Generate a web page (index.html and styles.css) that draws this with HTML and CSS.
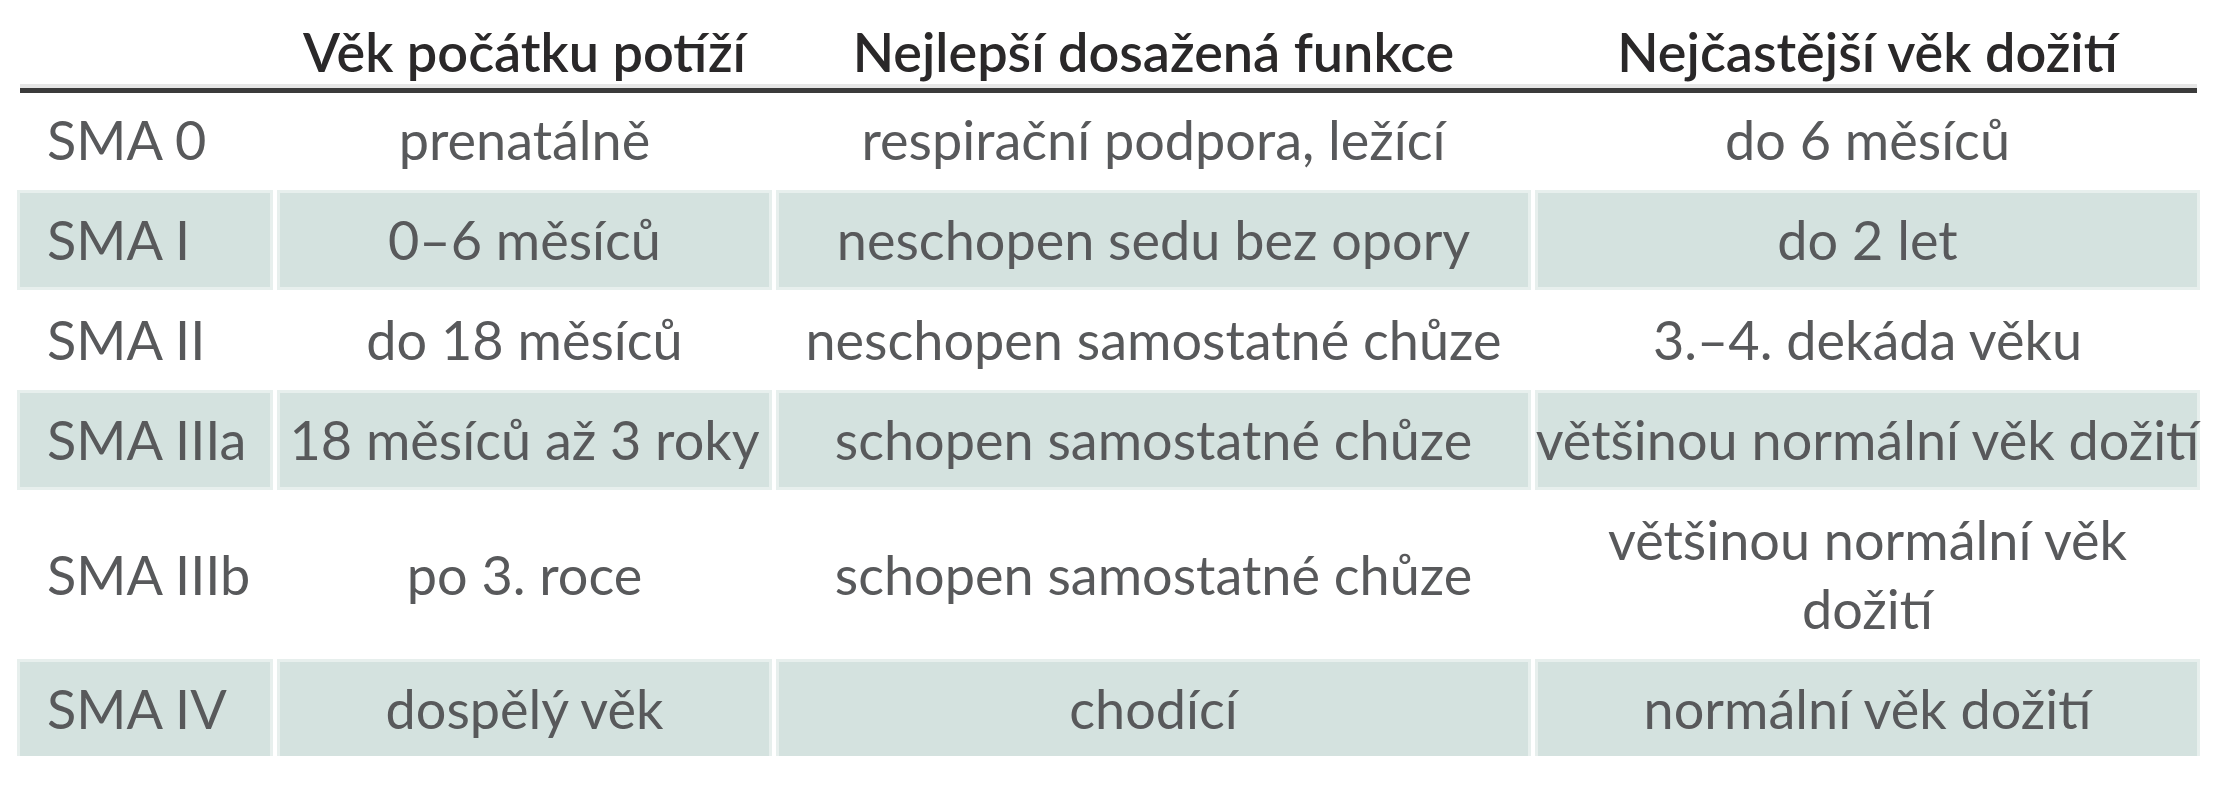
FILE: index.html
```html
<!DOCTYPE html>
<html lang="cs">
<head>
<meta charset="utf-8">
<title>SMA</title>
<link rel="stylesheet" href="styles.css">
</head>
<body>
<div class="table">
  <div class="row head">
    <div class="cell"></div>
    <div class="cell">Věk počátku potíží</div>
    <div class="cell">Nejlepší dosažená funkce</div>
    <div class="cell">Nejčastější věk dožití</div>
  </div>
  <div class="rule"></div>
  <div class="body">
    <div class="row">
      <div class="cell label">SMA 0</div>
      <div class="cell">prenatálně</div>
      <div class="cell">respirační podpora, ležící</div>
      <div class="cell">do 6 měsíců</div>
    </div>
    <div class="row shaded">
      <div class="cell label">SMA I</div>
      <div class="cell">0–6 měsíců</div>
      <div class="cell">neschopen sedu bez opory</div>
      <div class="cell">do 2 let</div>
    </div>
    <div class="row">
      <div class="cell label">SMA II</div>
      <div class="cell">do 18 měsíců</div>
      <div class="cell">neschopen samostatné chůze</div>
      <div class="cell">3.–4. dekáda věku</div>
    </div>
    <div class="row shaded">
      <div class="cell label">SMA IIIa</div>
      <div class="cell">18 měsíců až 3 roky</div>
      <div class="cell">schopen samostatné chůze</div>
      <div class="cell">většinou normální věk dožití</div>
    </div>
    <div class="row">
      <div class="cell label">SMA IIIb</div>
      <div class="cell">po 3. roce</div>
      <div class="cell">schopen samostatné chůze</div>
      <div class="cell">většinou normální věk<br>dožití</div>
    </div>
    <div class="row shaded">
      <div class="cell label">SMA IV</div>
      <div class="cell">dospělý věk</div>
      <div class="cell">chodící</div>
      <div class="cell">normální věk dožití</div>
    </div>
  </div>
</div>
</body>
</html>
```

FILE: styles.css
```css
html, body {
  margin: 0;
  padding: 0;
  background: #ffffff;
}

body {
  font-family: "Lato", "Open Sans", "Noto Sans", sans-serif;
  font-size: 54px;
  line-height: 69px;
  color: #58595b;
}

.table {
  margin-left: 20px;
  width: 2177px;
}

.row {
  display: grid;
  grid-template-columns: 250px 489px 749px 659px;
  column-gap: 10px;
}

.cell {
  display: flex;
  align-items: center;
  justify-content: center;
  text-align: center;
  white-space: nowrap;
  padding: 12px 0 13px;
}

.cell.label {
  justify-content: flex-start;
  text-align: left;
  padding-left: 27px;
}

.head .cell {
  padding: 17px 0 2px;
  font-weight: 600;
  color: #2a2829;
}

.rule {
  height: 5px;
  background: #3b3b3b;
  box-shadow: 0 -4px 0 #e6e6e6;
}

.body {
  display: flex;
  flex-direction: column;
  row-gap: 6px;
}

.shaded .cell {
  background: #d4e2df;
  box-shadow: 0 0 0 3px #e7efed;
}
```
